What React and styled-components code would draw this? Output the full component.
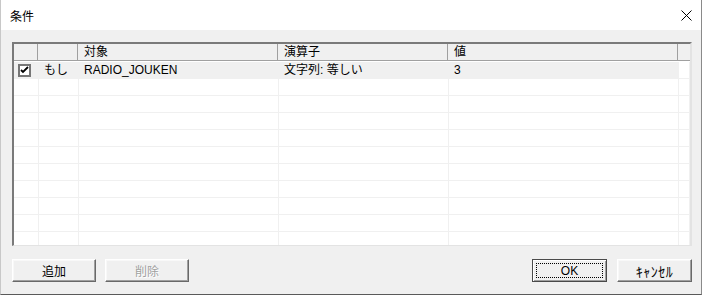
import React from 'react';
import styled, { createGlobalStyle } from 'styled-components';

const GlobalStyle = createGlobalStyle`
  body {
    margin: 0;
    background: #ffffff;
    font-family: "Liberation Sans", "Noto Sans CJK JP", sans-serif;
  }
`;

const COLS = '25px 40px 200px 170px 230px 1fr';

const Window = styled.div`
  width: 702px;
  height: 295px;
  box-sizing: border-box;
  display: flex;
  flex-direction: column;
  border-right: 1px solid #8a8a8a;
  border-left: 1px solid #c8c8c8;
  border-bottom: 1px solid #5a5a5a;
  background: #f0f0f0;
`;

const TitleBar = styled.div`
  height: 30px;
  flex: none;
  display: flex;
  align-items: center;
  justify-content: space-between;
  padding: 0 9px 0 9px;
  background: #ffffff;
  font-size: 12px;
  color: #000;
`;

const Title = styled.span`
  padding-top: 1px;
`;

const CloseIcon = styled.svg`
  width: 11px;
  height: 11px;
`;

const Body = styled.div`
  flex: 1;
  display: flex;
  flex-direction: column;
  padding: 12px 9px 0 11px;
`;

const ListBox = styled.div`
  height: 204px;
  box-sizing: border-box;
  border-top: 2px solid #7a7a7a;
  border-left: 2px solid #7a7a7a;
  border-right: 2px solid #e3e3e3;
  border-bottom: 1px solid #e3e3e3;
  background: #ffffff;
  overflow: hidden;
  font-size: 12px;
`;

const HeaderRow = styled.div`
  display: grid;
  grid-template-columns: ${COLS};
  height: 16px;
  border-bottom: 1px solid #a0a0a0;
  margin-bottom: 1px;
  background: #f0f0f0;
`;

const HeaderCell = styled.div`
  border-right: ${(p) => (p.$last ? 'none' : '1px solid #a0a0a0')};
  margin-right: ${(p) => (p.$last ? '0' : '1px')};
  padding-left: 5px;
  line-height: 16px;
  white-space: nowrap;
`;

const Row = styled.div`
  display: grid;
  grid-template-columns: ${COLS};
  height: 17px;
  box-sizing: border-box;
  border-bottom: 1px solid #f0f0f0;
`;

const Cell = styled.div`
  background: ${(p) => (p.$selected ? '#f0f0f0' : '#ffffff')};
  border-right: 1px solid #f0f0f0;
  padding-left: 5px;
  line-height: 16px;
  white-space: nowrap;
  display: flex;
  align-items: center;
`;

const CheckCell = styled(Cell)`
  padding-left: 4px;
`;

const CheckBox = styled.span`
  width: 13px;
  height: 13px;
  box-sizing: border-box;
  border: 2px solid #767676;
  background: #fff;
  display: flex;
  align-items: center;
  justify-content: center;
`;

const ButtonBar = styled.div`
  margin-top: 13px;
  display: flex;
  justify-content: space-between;
`;

const ButtonGroup = styled.div`
  display: flex;
  gap: ${(p) => p.$gap}px;
`;

const Button = styled.button`
  width: ${(p) => p.$width}px;
  height: 23px;
  box-sizing: border-box;
  padding: 0;
  display: flex;
  align-items: stretch;
  background: #f0f0f0;
  font-family: "Liberation Sans", "Noto Sans CJK JP", sans-serif;
  font-size: 12px;
  color: ${(p) => (p.disabled ? '#a0a0a0' : '#000')};
  border: 1px solid;
  border-color: ${(p) => (p.$default ? '#4a4a4a' : '#ffffff #696969 #696969 #ffffff')};
  box-shadow: ${(p) =>
    p.$default
      ? 'inset 1px 1px #ffffff, inset -1px -1px #a0a0a0'
      : 'inset -1px -1px #a0a0a0, inset 1px 1px #f8f8f8'};
`;

const ButtonLabel = styled.span`
  flex: 1;
  display: flex;
  align-items: center;
  justify-content: center;
  margin: ${(p) => (p.$focus ? '3px' : '0')};
  border: ${(p) => (p.$focus ? '1px dotted #000' : 'none')};
  font-size: ${(p) => (p.$wide ? '14px' : '12px')};
  letter-spacing: ${(p) => (p.$wide ? '0.5px' : 'normal')};
  text-shadow: ${(p) => (p.$disabled ? '1px 1px #ffffff' : 'none')};
`;

const rows = [
  { checked: true, type: 'もし', target: 'RADIO_JOUKEN', op: '文字列: 等しい', value: '3' },
];

const EMPTY_ROWS = 11;

const Check = () => (
  <svg width="9" height="9" viewBox="0 0 9 9">
    <path d="M1 4 L3 6 L8 1" fill="none" stroke="#000" strokeWidth="1.8" />
  </svg>
);

const App = () => {
  return (
    <>
      <GlobalStyle />
      <Window>
        <TitleBar>
          <Title>条件</Title>
          <CloseIcon viewBox="0 0 11 11">
            <path d="M0.5 0.5 L10.5 10.5 M10.5 0.5 L0.5 10.5" stroke="#000" strokeWidth="1" />
          </CloseIcon>
        </TitleBar>
        <Body>
          <ListBox>
            <HeaderRow>
              <HeaderCell />
              <HeaderCell />
              <HeaderCell>対象</HeaderCell>
              <HeaderCell>演算子</HeaderCell>
              <HeaderCell>値</HeaderCell>
              <HeaderCell $last />
            </HeaderRow>
            {rows.map((r, i) => (
              <Row key={i}>
                <CheckCell $selected>
                  <CheckBox>{r.checked && <Check />}</CheckBox>
                </CheckCell>
                <Cell $selected>{r.type}</Cell>
                <Cell $selected>{r.target}</Cell>
                <Cell $selected>{r.op}</Cell>
                <Cell $selected>{r.value}</Cell>
                <Cell />
              </Row>
            ))}
            {Array.from({ length: EMPTY_ROWS }).map((_, i) => (
              <Row key={`e${i}`}>
                <Cell />
                <Cell />
                <Cell />
                <Cell />
                <Cell />
                <Cell />
              </Row>
            ))}
          </ListBox>
          <ButtonBar>
            <ButtonGroup $gap={9}>
              <Button $width={84}>
                <ButtonLabel>追加</ButtonLabel>
              </Button>
              <Button $width={84} disabled>
                <ButtonLabel $disabled>削除</ButtonLabel>
              </Button>
            </ButtonGroup>
            <ButtonGroup $gap={10}>
              <Button $width={75} $default>
                <ButtonLabel $focus>OK</ButtonLabel>
              </Button>
              <Button $width={75}>
                <ButtonLabel $wide>ｷｬﾝｾﾙ</ButtonLabel>
              </Button>
            </ButtonGroup>
          </ButtonBar>
        </Body>
      </Window>
    </>
  );
};

export default App;
